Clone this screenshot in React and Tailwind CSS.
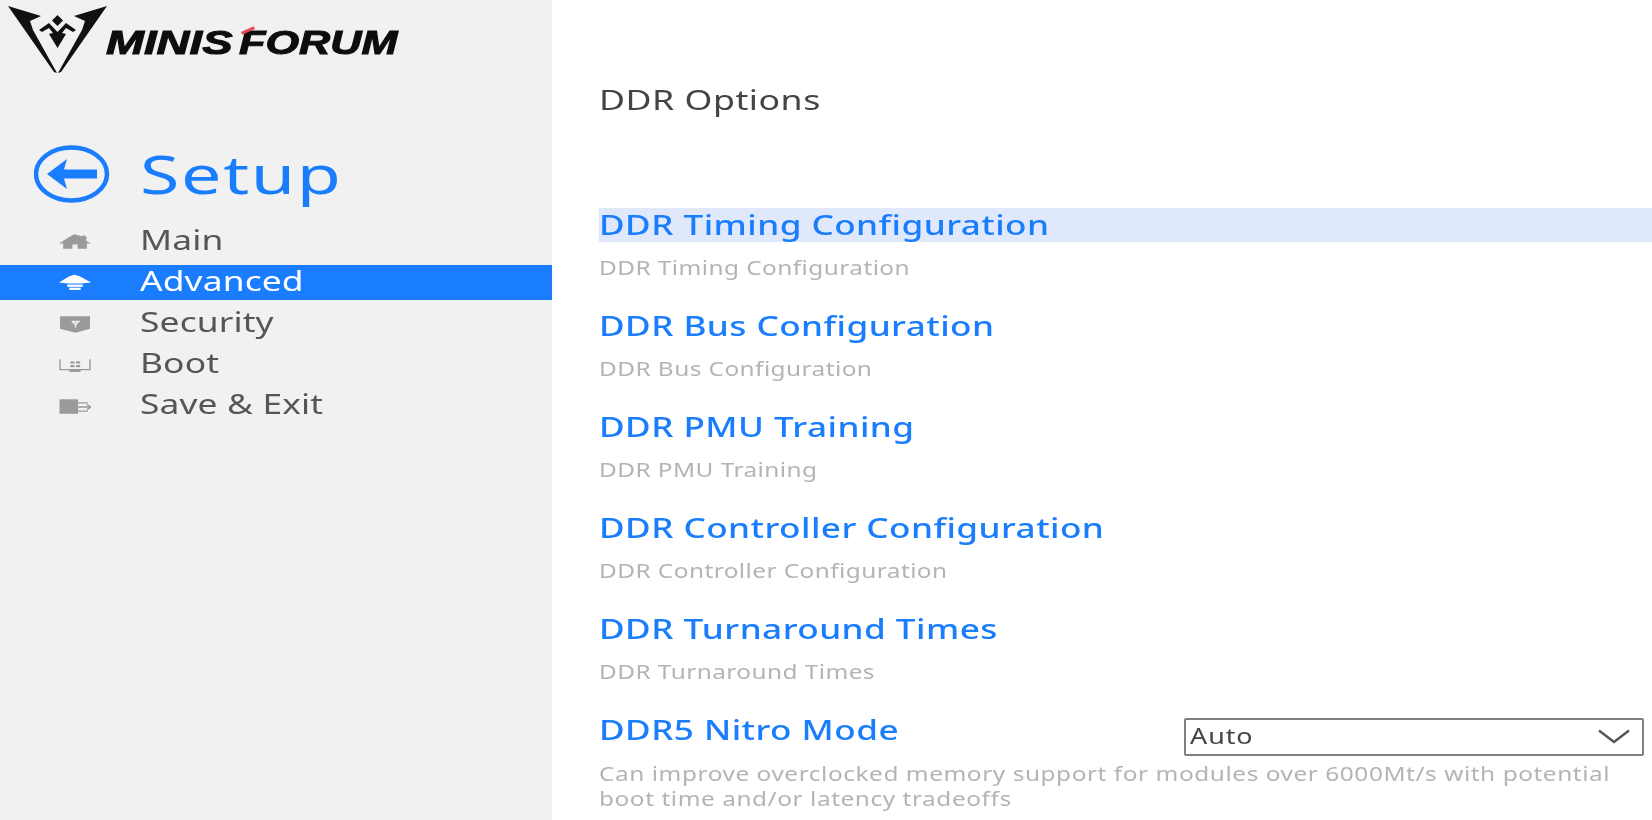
const font = { fontFamily: '"Noto Sans", sans-serif' };

function Logo() {
  return (
    <div className="flex h-[80px] items-start pl-[8px] pt-[6px]">
      <svg width="100" height="68" viewBox="8 6 100 68" className="shrink-0">
        <path d="M8 6 L41 16 L30 21 L33 30 L57 73 L54 72 Z" fill="#111" />
        <path d="M107 6 L74 16 L85 21 L82 30 L58 73 L61 72 Z" fill="#111" />
        <path d="M57.5 15 L63 20.5 L57.5 26 L52 20.5 Z" fill="#111" />
        <path d="M39 30 L49 23 L57.5 32 L66 23 L76 30 L73 32 L66 28 L62 33 L66 34 L57.5 48 L49 34 L53 33 L49 28 L42 32 Z" fill="#111" />
      </svg>
      <div className="relative ml-[-2px] mt-[22px] flex h-[30px] w-[296px] items-center">
        <span className="origin-left scale-x-[1.38] whitespace-nowrap text-[33px] leading-[30px] font-bold italic text-[#0d0d0d] [font-family:'Liberation_Sans',sans-serif] [-webkit-text-stroke:1px_#0d0d0d]">MINIS</span>
        <span className="ml-[41px] origin-left scale-x-[1.31] whitespace-nowrap text-[33px] leading-[30px] font-bold italic text-[#0d0d0d] [font-family:'Liberation_Sans',sans-serif] [-webkit-text-stroke:1px_#0d0d0d]">FORUM</span>
        <span className="absolute left-[135px] top-[1px] h-[3px] w-[14px] -rotate-[25deg] bg-[#e8485c]" />
      </div>
    </div>
  );
}

const icons = {
  Main: (
    <path d="M0 10 L11 3 L15 1 L22 3 L24 2 L27 4 L26 7 L31 10 L27 10 L27 15 L18 15 L18 11 L13 11 L13 15 L4 15 L4 10 Z" fill="currentColor" />
  ),
  Advanced: (
    <>
      <path d="M0 8 L10 2 L15 0.5 L20 2 L31 8 L22 9 L9 9 Z" fill="currentColor" />
      <rect x="8" y="10" width="15" height="2.2" fill="currentColor" />
      <rect x="10" y="13" width="11" height="2.2" fill="currentColor" />
    </>
  ),
  Security: (
    <>
      <path d="M1 1 L30 1 L30 13 L16 17 L1 13 Z" fill="currentColor" />
      <path d="M12.5 6 L19 6 L16 9 L16 12 M16 9 L12.5 6" stroke="#f1f1f1" strokeWidth="1.5" fill="none" />
    </>
  ),
  Boot: (
    <>
      <path d="M1 3 L1 13 L30 13 L30 3" stroke="currentColor" strokeWidth="1.3" fill="none" />
      <rect x="10" y="13" width="11" height="2.2" fill="currentColor" />
      <rect x="11" y="5" width="4" height="2" fill="currentColor" />
      <rect x="16.5" y="5" width="4" height="2" fill="currentColor" />
      <rect x="11" y="8.6" width="4" height="2" fill="currentColor" />
      <rect x="16.5" y="8.6" width="4" height="2" fill="currentColor" />
    </>
  ),
  "Save & Exit": (
    <>
      <rect x="0.5" y="2" width="18" height="14" fill="currentColor" />
      <path d="M18 5.5 L28 5.5 M18 9.5 L31 9.5 M18 13.5 L28 13.5 M27 7 L31 9.5 L27 12" stroke="currentColor" strokeWidth="1.3" fill="none" />
    </>
  ),
};

function NavRow({ label, active }) {
  return (
    <div className={`flex h-[35px] items-center ${active ? "bg-[#1a7dfd] text-white" : "text-[#565656]"} mb-[6px]`}>
      <svg width="32" height="18" viewBox="0 0 31 17" className={`ml-[59px] shrink-0 ${active ? "text-white" : "text-[#9a9a9a]"}`}>
        {icons[label]}
      </svg>
      <span className="ml-[49px] mb-[3px] origin-left scale-x-[1.31] whitespace-nowrap text-[27px] leading-[32px] tracking-[0.1px]">{label}</span>
    </div>
  );
}

function Item({ title, desc, active }) {
  return (
    <div className="h-[101px]">
      <div className={`flex h-[34px] items-start ${active ? "bg-[#e0e9fb]" : ""}`}>
        <span className="origin-left scale-x-[1.3] whitespace-nowrap text-[27px] leading-[33px] font-medium tracking-[0.35px] text-[#1a7dfd]">{title}</span>
      </div>
      <p className="mt-[13px] origin-left scale-x-[1.22] whitespace-nowrap text-[20px] leading-[25px] tracking-[0.35px] text-[#b4b4b4]">{desc}</p>
    </div>
  );
}

export default function App() {
  const rows = ["DDR Timing Configuration", "DDR Bus Configuration", "DDR PMU Training", "DDR Controller Configuration", "DDR Turnaround Times"];
  return (
    <div className="flex h-[820px] w-[1652px] overflow-hidden bg-white blur-[0.5px]" style={font}>
      <aside className="w-[552px] shrink-0 bg-[#f1f1f1]">
        <Logo />
        <div className="mt-[62px] flex h-[64px] items-center pl-[34px]">
          <svg width="76" height="58" viewBox="0 0 76 58" className="shrink-0">
            <ellipse cx="37.5" cy="29" rx="35.5" ry="26.5" fill="none" stroke="#1a7dfd" strokeWidth="4.5" />
            <path d="M13 29 L33 14 L30 24.5 L63 24.5 L63 33.5 L30 33.5 L33 44 Z" fill="#1a7dfd" />
          </svg>
          <span className="ml-[30px] origin-left scale-x-[1.38] text-[52px] leading-[60px] tracking-[1.2px] text-[#1a7dfd]">Setup</span>
        </div>
        <nav className="mt-[18px]">
          <NavRow label="Main" />
          <NavRow label="Advanced" active />
          <NavRow label="Security" />
          <NavRow label="Boot" />
          <NavRow label="Save & Exit" />
        </nav>
      </aside>
      <main className="min-w-0 flex-1 pl-[47px]">
        <h1 className="mt-[82px] origin-left scale-x-[1.32] whitespace-nowrap text-[27px] leading-[36px] tracking-[0.4px] text-[#444444]">DDR Options</h1>
        <div className="mt-[90px]">
          {rows.map((r, i) => (
            <Item key={r} title={r} desc={r} active={i === 0} />
          ))}
          <div>
            <div className="flex h-[34px] items-start justify-between">
              <span className="origin-left scale-x-[1.3] whitespace-nowrap text-[27px] leading-[33px] font-medium tracking-[0.35px] text-[#1a7dfd]">DDR5 Nitro Mode</span>
              <div className="mr-[8px] mt-[5px] flex h-[38px] w-[460px] shrink-0 items-center justify-between rounded-[2px] border-2 border-[#808080] pl-[4px] pr-[12px]">
                <span className="origin-left scale-x-[1.28] text-[21px] tracking-[0.75px] text-[#444444]">Auto</span>
                <svg width="32" height="16" viewBox="0 0 32 16" className="shrink-0"><path d="M1 1.5 L16 13 L31 1.5" fill="none" stroke="#555555" strokeWidth="2.4" /></svg>
              </div>
            </div>
            <p className="mt-[14px] origin-left scale-x-[1.22] whitespace-nowrap text-[20px] leading-[25px] tracking-[0.45px] text-[#b4b4b4]">
              Can improve overclocked memory support for modules over 6000Mt/s with potential<br />boot time and/or latency tradeoffs
            </p>
          </div>
        </div>
      </main>
    </div>
  );
}
